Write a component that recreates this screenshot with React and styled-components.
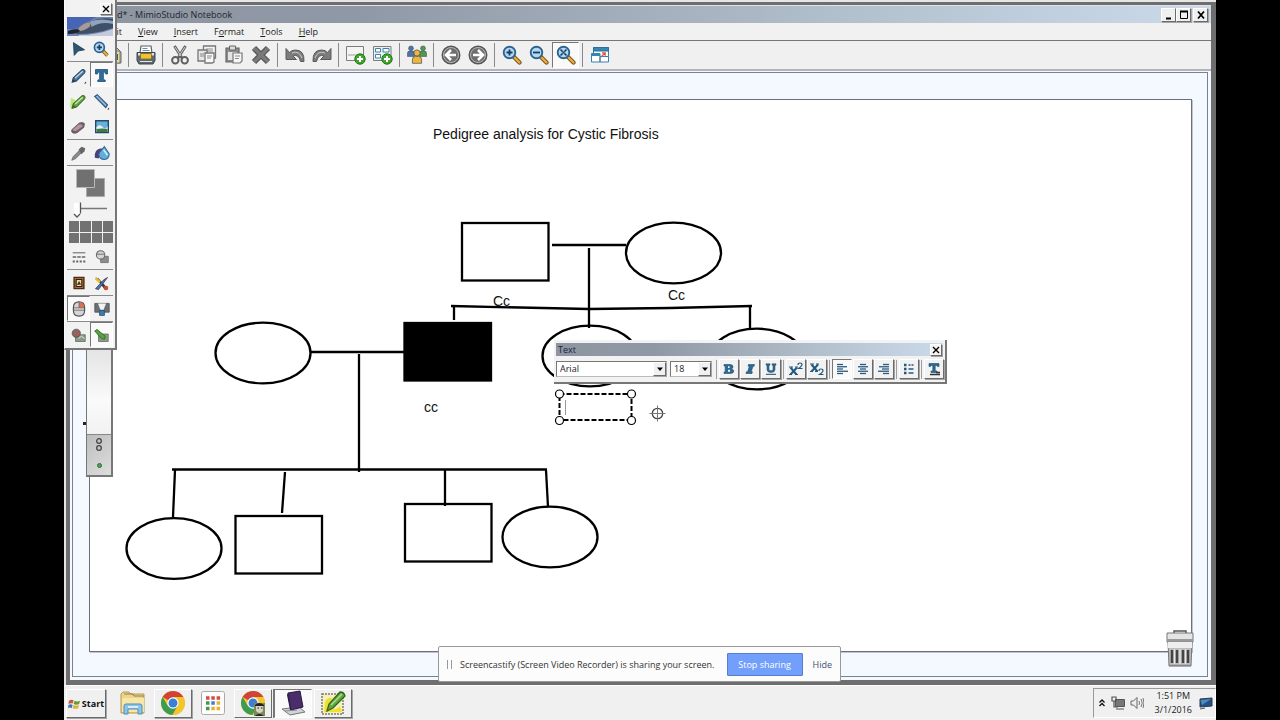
import React from 'react';
import styled, { createGlobalStyle, css } from 'styled-components';

// -----------------------------------------------------------------------------------------
// ---------------------------------------- Icons ------------------------------------------
// -----------------------------------------------------------------------------------------

const Icon = ({ size = 20, box = 20, children }) => (
  <svg width={size} height={size} viewBox={`0 0 ${box} ${box}`} fill="none" aria-hidden="true">
    {children}
  </svg>
);

const Lens = ({ children }) => (
  <Icon>
    <path d="M11.500 11.500l6 6" stroke="#6b5320" strokeWidth="4.200" strokeLinecap="round" />
    <path d="M12.500 12.500l5 5" stroke="#f0ae35" strokeWidth="2.400" strokeLinecap="round" />
    <circle cx="7.500" cy="7.500" r="5.800" fill="#b5d8f2" stroke="#2c6391" strokeWidth="1.900" />
    {children}
  </Icon>
);

const Plus = ({ x, y }) => (
  <g>
    <circle cx={x} cy={y} r="5.200" fill="#3fa52c" stroke="#257519" />
    <path d={`M${x - 3} ${y}h6M${x} ${y - 3}v6`} stroke="#fff" strokeWidth="2" />
  </g>
);

const Person = ({ x, y, color, scale = 1 }) => (
  <g transform={`translate(${x} ${y}) scale(${scale})`} fill={color} stroke="#3d4a55" strokeWidth="0.600">
    <circle cx="0" cy="-3.500" r="2.700" />
    <path d="M-4 5.500v-3q0-3 2.500-3h3q2.500 0 2.500 3v3z" />
  </g>
);

const Pen = ({ color, dark, glow, dot }) => (
  <Icon size={17}>
    {glow && <path d="M1 6l5 2 2 8-5 3-3-2z" fill={glow} />}
    <path d="M2.500 18l1.200-5L14 3.500q1.500-1 3 .3t.3 3L7.500 16.500z" fill={color} stroke={dark} strokeWidth="1.200" />
    <path d="M3 17.500l1-3.500 3 2.500z" fill={dark} />
    <path d="M6 13L15 5" stroke="#fff" strokeOpacity="0.700" strokeWidth="1.400" />
    {dot && <path d="M19 17v2.500h-2.500z" fill="#333" />}
  </Icon>
);

const Chrome = ({ children }) => (
  <Icon size={26} box={26}>
    <circle cx="13" cy="13" r="12" fill="#f3c52d" />
    <path d="M13 13L2.600 7A12 12 0 0 1 23.400 7H13z" fill="#cf4436" />
    <path d="M2.600 7A12 12 0 0 0 12.500 25l5.200-9.300L13 13 7.700 15.800z" fill="#3f9b4f" />
    <path d="M23.400 7A12 12 0 0 1 12.500 25l5.500-9.500L16 7z" fill="#f3c52d" />
    <circle cx="13" cy="13" r="5.700" fill="#fff" />
    <circle cx="13" cy="13" r="4.500" fill="#3b7ed6" />
    {children}
  </Icon>
);

const Bars = ({ rows }) => (
  <Icon size={14} box={14}>
    {rows.map(([x, w], i) => (
      <path key={i} d={`M${x} ${2.5 + i * 2.25}h${w}`} stroke="#2b5a80" strokeWidth="1.300" />
    ))}
  </Icon>
);

const icons = {
  open: (
    <Icon>
      <path d="M2 5h6l2 2h8v10H2z" fill="#e8c25a" stroke="#77613a" />
    </Icon>
  ),
  save: (
    <Icon>
      <path d="M1 2h13l5 5v11H1z" fill="#c9c9c9" stroke="#666" />
      <path d="M11 6h7v12h-7z" fill="#e9dd9a" stroke="#777" />
      <path d="M15 9v6" stroke="#555" strokeWidth="2" />
    </Icon>
  ),
  print: (
    <Icon>
      <path d="M4 8l1-7h10l1 7" fill="#fff" stroke="#56646e" strokeWidth="1.200" />
      <path d="M6.500 3.500h5M6.500 5.500h7" stroke="#6c8ca3" />
      <path d="M1 7.500h18v8l-2 3.500H3l-2-3.500z" fill="#5e6971" stroke="#3d474d" />
      <path d="M2 8h3v2.500H2zM15 8h3v2.500h-3z" fill="#dde1e3" />
      <path d="M4.500 8.500h11v5.500h-11z" fill="#f2c12e" stroke="#7c6827" strokeWidth="0.800" />
      <path d="M4 16.500h12" stroke="#dfe4e7" />
    </Icon>
  ),
  cut: (
    <Icon>
      <path d="M4.500 1l7.500 12M15.500 1L8 13" stroke="#606060" strokeWidth="2.800" />
      <path d="M5 2l6 9M15 2L9 11" stroke="#d5d5d5" strokeWidth="1" />
      <circle cx="5.300" cy="15.300" r="3.200" stroke="#606060" strokeWidth="2" />
      <circle cx="14.700" cy="15.300" r="3.200" stroke="#606060" strokeWidth="2" />
    </Icon>
  ),
  copy: (
    <Icon>
      <path d="M6.500 1h12v12h-12z" fill="#f4f4f4" stroke="#777" strokeWidth="1.300" />
      <path d="M9 4h7M9 6h7" stroke="#888" />
      <path d="M1 5h9v11H1z" fill="#e6e6e6" stroke="#777" strokeWidth="1.300" />
      <path d="M8 8h9v9l-2 1H8z" fill="#f8f8f8" stroke="#777" strokeWidth="1.300" />
      <path d="M10 11h5M10 13h4M3 9h4M3 11h4" stroke="#888" />
    </Icon>
  ),
  paste: (
    <Icon>
      <path d="M2 3h13v14H2z" fill="#8c8c8c" stroke="#666" strokeWidth="1.200" />
      <path d="M5.500 1h6v4h-6z" fill="#ddd" stroke="#666" />
      <path d="M4 7h9v8H4z" fill="#e3e3e3" />
      <path d="M9 8h9v8l-2 2H9z" fill="#f7f7f7" stroke="#777" strokeWidth="1.200" />
      <path d="M11 11h5M11 13.500h4" stroke="#888" />
    </Icon>
  ),
  remove: (
    <Icon>
      <path d="M3 3l14 14M17 3L3 17" stroke="#565656" strokeWidth="6" />
      <path d="M3 3l14 14M17 3L3 17" stroke="#7a7a7a" strokeWidth="3.600" />
    </Icon>
  ),
  undo: (
    <Icon>
      <path d="M1 3.500v11h10.500L8 11q5.500-2.500 7.500 5.500H19Q19.500 5 10.500 5 6.500 5 4.500 7.500z" fill="#7c7c7c" stroke="#5b5b5b" />
      <path d="M7 8q7-3 10 5" stroke="#c8c8c8" />
    </Icon>
  ),
  redo: (
    <Icon>
      <path d="M19 3.500v11H8.500L12 11q-5.500-2.500-7.500 5.500H1Q.5 5 9.500 5q4 0 6 2.500z" fill="#7c7c7c" stroke="#5b5b5b" />
      <path d="M13 8q-7-3-10 5" stroke="#c8c8c8" />
    </Icon>
  ),
  addPage: (
    <Icon>
      <path d="M.5 1.500h17v14H.5z" fill="#f4f4f4" stroke="#7d7d7d" />
      <path d="M2 10h9" stroke="#c9c9c9" strokeWidth="2" />
      <Plus x={14} y={14} />
    </Icon>
  ),
  importPage: (
    <Icon>
      <path d="M.5 1.500h17.500v14H.5z" fill="#e9eff3" stroke="#7d7d7d" />
      <path d="M2.500 3.500h5v3.500h-5zM2.500 9.500h5v3.500h-5zM10 3.500h6v3.500h-6z" fill="#fff" stroke="#3f82a5" />
      <Plus x={14} y={14} />
    </Icon>
  ),
  people: (
    <Icon>
      <Person x={4} y={6.500} color="#4d74ad" scale={0.900} />
      <Person x={16} y={6.500} color="#4f9a4c" scale={0.900} />
      <Person x={10} y={12} color="#f0b63a" scale={1.150} />
    </Icon>
  ),
  back: (
    <Icon>
      <circle cx="10" cy="10" r="8.800" fill="#6f6f6f" stroke="#555" strokeWidth="1.400" />
      <circle cx="10" cy="10" r="7.500" stroke="#b5b5b5" />
      <path d="M10 5l-5 5 5 5M5.500 10H15" stroke="#fff" strokeWidth="2.600" />
    </Icon>
  ),
  forward: (
    <Icon>
      <circle cx="10" cy="10" r="8.800" fill="#6f6f6f" stroke="#555" strokeWidth="1.400" />
      <circle cx="10" cy="10" r="7.500" stroke="#b5b5b5" />
      <path d="M10 5l5 5-5 5M14.500 10H5" stroke="#fff" strokeWidth="2.600" />
    </Icon>
  ),
  zoomIn: (
    <Lens>
      <path d="M4.500 7.500h6M7.500 4.500v6" stroke="#163f63" strokeWidth="1.800" />
    </Lens>
  ),
  zoomOut: (
    <Lens>
      <path d="M4 7.500h7" stroke="#163f63" strokeWidth="1.800" />
    </Lens>
  ),
  zoomFit: (
    <Lens>
      <path d="M4.500 4.500l6 6M10.500 4.500l-6 6" stroke="#163f63" strokeWidth="1.500" strokeDasharray="3 2.500" />
      <path d="M7.500 6.500v2" stroke="#163f63" strokeWidth="2" />
    </Lens>
  ),
  windows: (
    <Icon>
      <path d="M3.500 2.500h15v14h-15z" fill="#fff" stroke="#3a81aa" />
      <path d="M3.500 2.500h15V6h-15z" fill="#3787b5" stroke="#2d6f96" />
      <path d="M1.500 8.500h8.500v8.500H1.500zM10 11.500h8.500v5.500H10z" fill="#fff" stroke="#3a81aa" />
      <path d="M1.500 8.500h8.500v2.500H1.500z" fill="#3787b5" />
      <path d="M11 12l4-4M12 7.800h3.200v3" stroke="#d05c36" strokeWidth="1.200" />
    </Icon>
  ),
};

const tools = {
  select: (
    <Icon size={16}>
      <path d="M3 2l14 9-8 1.500L4 18z" fill="#2d5674" stroke="#203f56" />
    </Icon>
  ),
  zoom: (
    <Icon size={17}>
      <path d="M11 11l6 6" stroke="#6b5320" strokeWidth="4.200" />
      <path d="M12 12l5 5" stroke="#f0ae35" strokeWidth="2.400" />
      <circle cx="7.500" cy="7.500" r="5.800" fill="#b5d8f2" stroke="#2c6391" strokeWidth="2" />
      <path d="M4.500 7.500h6M7.500 4.500v6" stroke="#163f63" strokeWidth="2" />
    </Icon>
  ),
  pen: <Pen color="#4a7ba5" dark="#27435c" dot />,
  text: (
    <Icon size={15}>
      <path d="M2 2h16v6h-2.500q-.5-3-3-3v10.500l2.500.5v2H5v-2l2.500-.5V5q-2.500 0-3 3H2z" fill="#2e6f9f" stroke="#1c4869" />
    </Icon>
  ),
  highlighter: <Pen color="#63a838" dark="#3e6a26" glow="#bbe77e" />,
  line: (
    <Icon size={17}>
      <path d="M2 4l3-2 12 12-2 3z" fill="#8db4da" stroke="#33557a" strokeWidth="1.400" />
      <path d="M19 17v2.500h-2.500z" fill="#333" />
    </Icon>
  ),
  eraser: (
    <Icon size={15}>
      <path d="M1 13L11 4q5-2 7 1l-1 5-9 7q-5 2-7-1z" fill="#6f6267" stroke="#5d5156" />
      <path d="M2 13l8-7q4-1 6 2l-8 6q-4 2-6-1z" fill="#b5949d" />
    </Icon>
  ),
  picture: (
    <Icon size={14}>
      <path d="M1 1h18v17H1z" fill="#69b1dd" stroke="#234a69" strokeWidth="2" />
      <path d="M2 10q5-5 9 0t7-1v8H2z" fill="#e7eef0" />
      <path d="M2 13l8-1 8 1v4H2z" fill="#3f7a45" />
    </Icon>
  ),
  dropper: (
    <Icon size={15}>
      <path d="M1 19l2-5 8-8 3 3-8 8z" fill="#8a8a8a" stroke="#666" />
      <path d="M10 5l4-4 5 2-1 4-4 4z" fill="#666" />
    </Icon>
  ),
  fill: (
    <Icon size={16}>
      <path d="M1 16Q0 5 9 4l4 4q-7 2-7 9z" fill="#4c3f7c" />
      <path d="M7 9l6-7 6 9q0 7-6 7t-7-6z" fill="#67add9" stroke="#2c6896" strokeWidth="1.300" />
      <path d="M12 6l5 7" stroke="#d4eefb" strokeWidth="2" />
    </Icon>
  ),
  dash: (
    <Icon size={14}>
      <path d="M1 4h18" stroke="#666" strokeWidth="1.500" />
      <path d="M1 10h18" stroke="#666" strokeWidth="2" strokeDasharray="5 1.500" />
      <path d="M1 16.500h18" stroke="#666" strokeWidth="3" strokeDasharray="3 2" />
    </Icon>
  ),
  shapes: (
    <Icon size={14}>
      <path d="M8 9h11v9H8z" fill="#8c8c8c" stroke="#666" />
      <circle cx="8" cy="7" r="6" fill="#d5d5d5" stroke="#666" strokeWidth="1.500" />
      <path d="M2 6h12" stroke="#777" strokeWidth="1.500" />
    </Icon>
  ),
  gallery: (
    <Icon size={14}>
      <path d="M3 2h14v16H3z" fill="#b36a28" stroke="#4c2c13" strokeWidth="2" />
      <path d="M6 5h8v10H6z" fill="#f3d8a2" stroke="#222" strokeWidth="1.500" />
      <path d="M7 13l3-6 3 5z" fill="#333" />
    </Icon>
  ),
  brushes: (
    <Icon size={15}>
      <path d="M2 2l4 1 12 13-3 3z" fill="#3a3a52" />
      <path d="M18 2l-5 3L2 17l4 1z" fill="#4a76bc" stroke="#333" />
      <path d="M2 3l6 5" stroke="#e4bd36" strokeWidth="3.500" />
      <circle cx="16" cy="16" r="3" fill="#c84d2c" />
    </Icon>
  ),
  mouse: (
    <Icon size={16}>
      <path d="M3 8q0-7 7-7t7 7v4q0 7-7 7t-7-7z" fill="#d6d6d6" stroke="#555" strokeWidth="1.500" />
      <path d="M10 1.500q6.500 0 6.500 7H10z" fill="#e0714d" />
      <path d="M3 8.500h14M10 1v7.500M3.500 11.500h13" stroke="#666" />
    </Icon>
  ),
  screen: (
    <Icon size={16}>
      <path d="M1 3h18v11H1z" fill="#6a6f73" stroke="#4e5255" />
      <path d="M5 3h10l-3 8H8z" fill="#f3f3f3" />
      <path d="M7 12h6v6H7z" fill="#3a7fb3" stroke="#234e72" />
    </Icon>
  ),
  record: (
    <Icon size={15}>
      <path d="M6 9h13v9H6z" fill="#8a9b86" stroke="#626a60" />
      <circle cx="7" cy="7" r="5.500" fill="#7d6a6a" stroke="#5c5050" />
      <circle cx="8" cy="7" r="2.500" fill="#cb4d52" />
      <path d="M10 14l4-3 4 3" stroke="#fff" />
    </Icon>
  ),
  write: (
    <Icon size={15}>
      <path d="M6 8h13v10H6z" fill="#8a9b86" stroke="#626a60" />
      <path d="M1 4l3-2 11 9-1 4-4-1z" fill="#52a83f" stroke="#316d27" strokeWidth="1.300" />
    </Icon>
  ),
};

const Glyph = {
  bold: (
    <Icon size={12} box={12}>
      <path d="M1 1.500h6q3.200.2 3 2.500-.2 1.500-1.800 1.900Q10.800 6.500 10.800 8q0 2.500-3.800 2.500H1V9h1.200V3H1z" fill="#2e6a96" stroke="#1d4a6b" strokeWidth="0.600" />
      <path d="M5 3.200h1.500v1.800H5zM5 6.800h2v2H5z" fill="#fff" />
    </Icon>
  ),
  italic: (
    <Icon size={12} box={12}>
      <path d="M4.500 1.500h6l-.4 1.700H9L7.200 8.800h1.200L8 10.500H2l.4-1.700h1.200l1.800-5.600H4.100z" fill="#2e6a96" stroke="#1d4a6b" strokeWidth="0.600" />
    </Icon>
  ),
  underline: (
    <Icon size={12} box={12}>
      <path d="M1 .8h4v1.400H4v4q0 1.500 2 1.500t2-1.500v-4H7V.8h4v1.400h-1v4.300Q10 9.500 6 9.500T2 6.500V2.200H1z" fill="#2e6a96" stroke="#1d4a6b" strokeWidth="0.500" />
      <path d="M1 11.300h10" stroke="#1d4a6b" />
    </Icon>
  ),
  superscript: (
    <Icon size={14} box={14}>
      <path d="M1.500 5.500l6 7M8 5.500l-6.500 7" stroke="#24597f" strokeWidth="2" />
      <path d="M0 5h4M6 5h3M0 12.500h3M6 12.500h3" stroke="#24597f" />
      <path d="M9 3q0-2 2-2t2 1.800Q13 4 9.500 6.500H13.500" stroke="#24597f" strokeWidth="1.200" />
    </Icon>
  ),
  subscript: (
    <Icon size={14} box={14}>
      <path d="M1.500 2.500l6 7M8 2.500l-6.500 7" stroke="#24597f" strokeWidth="2" />
      <path d="M0 2h4M6 2h3M0 9.500h3M5 9.500h3" stroke="#24597f" />
      <path d="M9 9q0-2 2-2t2 1.800Q13 10 9.500 12.500H13.500" stroke="#24597f" strokeWidth="1.200" />
    </Icon>
  ),
  left: <Bars rows={[[2, 6], [2, 10], [2, 6], [2, 11], [2, 6]]} />,
  center: <Bars rows={[[4, 6], [2, 10], [4, 6], [2, 10], [4, 6]]} />,
  right: <Bars rows={[[6, 6], [2, 10], [5, 7], [1, 11], [6, 6]]} />,
  list: (
    <Icon size={14} box={14}>
      <path d="M2 3h2.500M2 7h2.500M2 11h2.500" stroke="#24597f" strokeWidth="2.400" />
      <path d="M6.500 3h2M9.500 3h2M6.500 7h5M6.500 11h5" stroke="#24597f" strokeWidth="1.300" />
    </Icon>
  ),
  format: (
    <Icon size={14} box={14}>
      <path d="M2 1.500h10v3h-1.500l-.5-1H8.200V9H10v1.500H4V9h1.800V3.500H4l-.5 1H2z" fill="#2e6a96" stroke="#1d4a6b" strokeWidth="0.600" />
      <path d="M3 12.500h10M9 10.500h4" stroke="#333" strokeWidth="1.500" />
    </Icon>
  ),
  close: (
    <Icon size={8} box={8}>
      <path d="M1 1l6 6M7 1L1 7" stroke="#000" strokeWidth="1.400" />
    </Icon>
  ),
  minimize: (
    <Icon size={10} box={10}>
      <path d="M2 8.500h5" stroke="#000" strokeWidth="2" />
    </Icon>
  ),
  maximize: (
    <Icon size={10} box={10}>
      <path d="M1.500 1.500h7v7h-7z" stroke="#000" />
      <path d="M1 1.500h8" stroke="#000" strokeWidth="2" />
    </Icon>
  ),
  exit: (
    <Icon size={10} box={10}>
      <path d="M2 1.500l6 7M8 1.500l-6 7" stroke="#000" strokeWidth="1.800" />
    </Icon>
  ),
  arrow: (
    <Icon size={8} box={8}>
      <path d="M1 2.500h6L4 6z" fill="#000" />
    </Icon>
  ),
};

// -----------------------------------------------------------------------------------------
// ---------------------------------------- Data -------------------------------------------
// -----------------------------------------------------------------------------------------

const menus = ['Edit', 'View', 'Insert', 'Format', 'Tools', 'Help'];
const menuKey = { Format: 1 };

const toolbarGroups = [
  ['open', 'save'],
  ['print'],
  ['cut', 'copy', 'paste', 'remove'],
  ['undo', 'redo'],
  ['addPage', 'importPage'],
  ['people'],
  ['back', 'forward'],
  ['zoomIn', 'zoomOut', 'zoomFit'],
  ['windows'],
];

const paletteTop = [
  { items: ['select', 'zoom'], line: true },
  { items: ['pen', 'text'] },
  { items: ['highlighter', 'line'] },
  { items: ['eraser', 'picture'], line: true },
  { items: ['dropper', 'fill'], line: true },
];

const paletteBottom = [
  { items: ['dash', 'shapes'], line: true },
  { items: ['gallery', 'brushes'], line: true },
  { items: ['mouse', 'screen'], line: true },
  { items: ['record', 'write'] },
];

const pressedTools = ['text', 'mouse', 'write'];

const textGroups = [
  ['bold', 'italic', 'underline'],
  ['superscript', 'subscript'],
  ['left', 'center', 'right'],
  ['list'],
  ['format'],
];

const females = [
  [583.5, 153],
  [173, 253],
  [500, 256],
  [667, 259],
  [84, 448.5],
  [460, 437],
];

const males = [
  [372, 123],
  [314.5, 223, true],
  [145.5, 416],
  [315, 404],
];

const lines = [
  'M462 145H536',
  'M499 148V228',
  'M361 206L430 207.500 499 209 580 208 662 206',
  'M364 206V220',
  'M660 206V229',
  'M221 252H315',
  'M269 254V372',
  'M82 369.500H457',
  'M85 370L83 417',
  'M195 372L192 413',
  'M355 370V406',
  'M456 370L458 407',
];

// -----------------------------------------------------------------------------------------
// -------------------------------------- Components ---------------------------------------
// -----------------------------------------------------------------------------------------

const Pedigree = () => (
  <Drawing role="img" aria-label="Pedigree chart">
    <g fill="none" stroke="#000" strokeWidth="2.300">
      {females.map(([x, y]) => (
        <ellipse key={`${x}-${y}`} cx={x} cy={y} rx="47.500" ry="30.300" />
      ))}
      {males.map(([x, y, filled]) => (
        <rect key={`${x}-${y}`} x={x} y={y} width="86.500" height="57.500" fill={filled ? '#000' : 'none'} />
      ))}
      {lines.map((d) => (
        <path key={d} d={d} />
      ))}
    </g>
    <g stroke="#000" fill="#fff">
      <rect x="469.500" y="294" width="72" height="26" fill="none" strokeWidth="2" strokeDasharray="5 2" />
      <path d="M475.500 300v15" stroke="#999" />
      {[[469.5, 294], [541.5, 294], [469.5, 320.5], [541.5, 320.5]].map(([x, y]) => (
        <circle key={`${x}-${y}`} cx={x} cy={y} r="4" strokeWidth="1.200" />
      ))}
    </g>
    <g stroke="#444" fill="none">
      <circle cx="567.500" cy="313.500" r="5.200" strokeWidth="1.300" />
      <path d="M559.500 313.500h16M567.500 305.500v16" stroke="#777" />
    </g>
  </Drawing>
);

const Palette = () => {
  const renderRow = ({ items, line }) => (
    <ToolRow key={items[0]} $line={line}>
      {items.map((name) => (
        <ToolButton key={name} type="button" aria-label={name} $pressed={pressedTools.includes(name)}>
          {tools[name]}
        </ToolButton>
      ))}
    </ToolRow>
  );

  return (
    <PaletteWindow>
      <PaletteHeader>
        <CloseButton type="button" aria-label="Close tools">
          {Glyph.close}
        </CloseButton>
      </PaletteHeader>
      <Banner viewBox="0 0 47 19" preserveAspectRatio="none" aria-hidden="true">
        <path d="M0 0h47v19H0z" fill="#6f83b5" />
        <path d="M0 0h30L8 12H0z" fill="#4865b5" />
        <path d="M8 13Q28-2 47 2v9Q30 17 10 17z" fill="#3e4f66" />
        <path d="M24 4q12-3 23 0v3q-12-3-22 3z" fill="#8fa3bd" />
        <path d="M11 12q6-7 14-7l-2 5q-6 4-10 4z" fill="#a99a98" />
        <path d="M1 14q6-3 12-1 0 4-12 4z" fill="#1f2430" />
        <path d="M12 18q18 0 35-6v7H12z" fill="#c4c9dd" />
      </Banner>
      {paletteTop.map(renderRow)}
      <ColorArea viewBox="0 0 46 34" role="img" aria-label="Fill and line colour">
        <path d="M19.500 12.500h18v18h-18z" fill="#767676" stroke="#a9a9a9" />
        <path d="M9.500 3.500h18v18h-18z" fill="#707070" stroke="#b9b9b9" />
      </ColorArea>
      <Thickness viewBox="0 0 46 20" role="img" aria-label="Line thickness">
        <path d="M14 8.500h26" stroke="#777" strokeWidth="1.500" />
        <path d="M7 3h6v11l-3 3-3-3z" fill="#fff" />
        <path d="M13.500 2.500v11M7 14l3 3 3-3" stroke="#555" fill="none" strokeWidth="1.300" />
      </Thickness>
      <Swatches>
        {Array.from({ length: 8 }, (_, i) => (
          <Swatch key={i} type="button" aria-label={`Colour ${i + 1}`} />
        ))}
      </Swatches>
      {paletteBottom.map(renderRow)}
    </PaletteWindow>
  );
};

const TextToolbar = () => (
  <TextWindow>
    <TextTitle>
      <span>Text</span>
      <CloseButton type="button" aria-label="Close text tools">
        {Glyph.close}
      </CloseButton>
    </TextTitle>
    <TextControls>
      <Combo $width="111px">
        <select aria-label="Font" defaultValue="Arial">
          <option>Arial</option>
        </select>
        <ComboArrow>{Glyph.arrow}</ComboArrow>
      </Combo>
      <Combo $width="42px">
        <select aria-label="Font size" defaultValue="18">
          <option>18</option>
        </select>
        <ComboArrow>{Glyph.arrow}</ComboArrow>
      </Combo>
      {textGroups.map((group) => (
        <React.Fragment key={group[0]}>
          <TextSeparator />
          {group.map((name) => (
            <TextButton key={name} type="button" aria-label={name} $pressed={name === 'left'}>
              {Glyph[name]}
            </TextButton>
          ))}
        </React.Fragment>
      ))}
    </TextControls>
  </TextWindow>
);

const Taskbar = () => (
  <TaskbarWrapper>
    <StartButton type="button">
      <Icon size={13} box={14}>
        <path d="M1 4q3-2 5-.5L5 7Q3 6 .5 7.500z" fill="#c9573a" />
        <path d="M7 4q3 1.500 6 0l-1 3.500q-3 1.500-6 0z" fill="#6b9a3c" />
        <path d="M.5 8.500Q3 7 5 8.500L4 12q-2-1.500-4 0z" fill="#3f77b5" />
        <path d="M6 8.500q3 1.500 6 0L11 12q-3 1.500-6 0z" fill="#e0b13b" />
      </Icon>
      Start
    </StartButton>
    <TaskList>
      <TaskButton type="button" aria-label="File Explorer">
        <Icon size={26} box={26}>
          <path d="M1 4l2-2h6l2 2h13v19H1z" fill="#ecd489" stroke="#b99a4a" />
          <path d="M4 4h9l1 2h10" stroke="#8c8250" />
          <path d="M2 8h22v14H2z" fill="#f6e7a8" />
          <path d="M4 24v-8q0-2 2-2h14q2 0 2 2v8h-4v-5H8v5z" fill="#8cc4e8" stroke="#4f8db9" />
          <path d="M8 17h10" stroke="#d9effb" strokeWidth="2" />
        </Icon>
      </TaskButton>
      <TaskButton type="button" aria-label="Chrome" $raised>
        <Chrome />
      </TaskButton>
      <TaskButton type="button" aria-label="Apps">
        <Icon size={26} box={26}>
          <rect x="1.500" y="1.500" width="23" height="23" rx="2" fill="#fff" stroke="#aaa" />
          <path d="M6 8h3.500M11.300 8h3.500M16.600 8h3.500" stroke="#d84b3e" strokeWidth="3.500" />
          <path d="M6 13h3.500M6 18.500h3.500" stroke="#3f9b4f" strokeWidth="3.500" />
          <path d="M11.300 13h3.500" stroke="#3b7ed6" strokeWidth="3.500" />
          <path d="M16.600 13h3.500M11.300 18.500h3.500M16.600 18.500h3.500" stroke="#ecb22e" strokeWidth="3.500" />
        </Icon>
      </TaskButton>
      <TaskButton type="button" aria-label="Chrome profile" $raised $stacked>
        <Chrome>
          <path d="M14 13h11v13H14z" fill="#7b8a55" />
          <path d="M16 15q3.500-3 7 0v6q-3.500 4-7 0z" fill="#d8d2c4" />
          <path d="M15 15q4-4 9 0v1h-9zM15 26q4-4 9 0z" fill="#222" />
          <path d="M17.500 18h1.500M21 18h1.500" stroke="#222" />
        </Chrome>
      </TaskButton>
      <TaskButton type="button" aria-label="MimioStudio" $pressed>
        <Icon size={26} box={26}>
          <path d="M2 19l17-2 6 5-15 3z" fill="#d0d3d8" stroke="#777" />
          <path d="M8 3l12-2 3 16-12 3z" fill="#4a2d6b" stroke="#2b1a40" />
          <path d="M8 3l-1 2 3 15 1 0z" fill="#2b1a40" />
          <path d="M5 21l12-1" stroke="#888" />
        </Icon>
      </TaskButton>
      <TaskButton type="button" aria-label="MimioStudio Notebook" $raised>
        <Icon size={26} box={26}>
          <path d="M2 4h21v20H2z" fill="#f5f0c0" stroke="#7c7c66" strokeWidth="1.500" strokeDasharray="2 1" />
          <path d="M5 12q2-5 7-4L9 19q6 2 11-3l2 6H4z" fill="#f0df2f" />
          <path d="M7 21l2-7L20 2q4 0 5 4L13 18z" fill="#62a83e" stroke="#33651f" strokeWidth="1.300" />
          <path d="M11 15L22 4" stroke="#b0dc90" strokeWidth="1.500" />
        </Icon>
      </TaskButton>
    </TaskList>
    <Tray>
      <Icon size={8} box={8}>
        <path d="M1.500 3.500L4 1l2.500 2.500M1.500 7L4 4.500 6.500 7" stroke="#111" strokeWidth="1.300" />
      </Icon>
      <Icon size={14} box={14}>
        <path d="M4.500 3.500h9v7h-9z" fill="#777" stroke="#555" />
        <path d="M1 1h4v4H1zM3 5v6h4M5 13h8" stroke="#555" strokeWidth="1.200" />
      </Icon>
      <Icon size={14} box={14}>
        <path d="M1 5h2.500L7 1.500v11L3.500 9H1z" fill="#eee" stroke="#666" />
        <path d="M9 5q1 2 0 4M11 3q2.500 4 0 8M13 2q2 5 0 10" stroke="#777" />
      </Icon>
      <Clock>
        <time>1:51 PM</time>
        <time>3/1/2016</time>
      </Clock>
      <Icon size={14} box={14}>
        <path d="M1 3l12-1v8L1 11z" fill="#1e5386" stroke="#2b3b4a" />
        <path d="M1.500 4L12 3 3 9z" fill="#4e8cc0" />
        <path d="M1 13l5-1" stroke="#555" />
      </Icon>
    </Tray>
  </TaskbarWrapper>
);

const App = () => (
  <>
    <GlobalStyle />
    <Screen>
      <Desktop>
        <AppWindow>
          <TitleBar>
            <Title>d* - MimioStudio Notebook</Title>
            <WindowButtons>
              <WindowButton type="button" aria-label="Minimize">{Glyph.minimize}</WindowButton>
              <WindowButton type="button" aria-label="Maximize">{Glyph.maximize}</WindowButton>
              <WindowButton type="button" aria-label="Close" $apart>{Glyph.exit}</WindowButton>
            </WindowButtons>
          </TitleBar>
          <MenuBar>
            {menus.map((name) => {
              const at = menuKey[name] || 0;
              return (
                <MenuItem key={name} type="button">
                  {name.slice(0, at)}
                  <u>{name[at]}</u>
                  {name.slice(at + 1)}
                </MenuItem>
              );
            })}
          </MenuBar>
          <Toolbar>
            {toolbarGroups.map((group, index) => (
              <React.Fragment key={group[0]}>
                {index > 0 && <Separator />}
                {group.map((name) => (
                  <ToolbarButton key={name} type="button" aria-label={name} $pressed={name === 'zoomFit'}>
                    {icons[name]}
                  </ToolbarButton>
                ))}
              </React.Fragment>
            ))}
          </Toolbar>
          <Workspace>
            <Page>
              <Pedigree />
              <Label $x="343px" $y="26px">Pedigree analysis for Cystic Fibrosis</Label>
              <Label $x="403px" $y="193px">Cc</Label>
              <Label $x="578px" $y="187px">Cc</Label>
              <Label $x="334px" $y="299px">cc</Label>
            </Page>
            <Trash viewBox="0 0 28 37" aria-hidden="true">
              <path d="M8 3V1h12v2" stroke="#555" strokeWidth="1.500" fill="none" />
              <path d="M1 3h26v9H1z" fill="#e4e4e4" stroke="#777" />
              <path d="M1 9h26v2H1z" fill="#999" />
              <path d="M2 12h24l-1 24H3z" fill="#bdbdbd" stroke="#777" />
              <path d="M2 12h24v6H2z" fill="#eee" />
              <path d="M6 20v13M11 20v13M17 20v13M22 20v13" stroke="#444" strokeWidth="2.500" />
              <path d="M8.500 19v15M14 19v15M19.500 19v15" stroke="#e9e9e9" strokeWidth="1.200" />
              <path d="M3 35.500h22" stroke="#888" strokeWidth="1.500" />
            </Trash>
          </Workspace>
        </AppWindow>
        <Taskbar />
        <Dock>
          <DockHandle />
          <DockFoot>
            <Icon size={20} box={20}>
              <circle cx="10" cy="6" r="2.300" stroke="#444" strokeWidth="1.300" />
              <circle cx="10" cy="13" r="2.300" stroke="#444" strokeWidth="1.300" />
            </Icon>
            <DockLight />
          </DockFoot>
        </Dock>
        <Palette />
        <TextToolbar />
        <ShareBar>
          <Grip />
          <ShareText>Screencastify (Screen Video Recorder) is sharing your screen.</ShareText>
          <StopButton type="button">Stop sharing</StopButton>
          <HideLink href="#hide">Hide</HideLink>
        </ShareBar>
      </Desktop>
    </Screen>
  </>
);

// -----------------------------------------------------------------------------------------
// ---------------------------------- Styled Components ------------------------------------
// -----------------------------------------------------------------------------------------

const uiFont = "'Open Sans', 'Noto Sans', sans-serif";
const canvasFont = "'Liberation Sans', Arial, sans-serif";

const titleGradient = css`
  background: linear-gradient(90deg, #8d95a0 0%, #8f99a5 25%, #a3afba 50%, #b8c6d4 75%, #cbdaea 100%);
`;

const raised = css`
  border: 1px solid;
  border-color: #fff #6b6b6b #6b6b6b #fff;
  box-shadow: 1px 1px 0 #a5a5a5;
`;

const pressed = css`
  border: 1px solid;
  border-color: #777 #fff #fff #777;
  background: #fafafa;
`;

const GlobalStyle = createGlobalStyle`
  * {
    box-sizing: border-box;
  }
  body {
    margin: 0;
    background: #000;
    font: 9px ${uiFont};
    color: #1a1a1a;
  }
  button {
    display: flex;
    align-items: center;
    justify-content: center;
    flex: none;
    margin: 0;
    padding: 0;
    border: 0;
    background: none;
    font: inherit;
    color: inherit;
  }
  svg {
    flex: none;
  }
`;

const Screen = styled.div`
  display: flex;
  justify-content: center;
  height: 100vh;
`;

const Desktop = styled.main`
  position: relative;
  display: flex;
  flex-direction: column;
  width: 90%;
  background: #e6e6e6;
  overflow: hidden;
`;

const AppWindow = styled.section`
  flex: 1;
  display: flex;
  flex-direction: column;
  min-height: 0;
  margin: 2px 0 0 2px;
  border: solid #6e6e6e;
  border-width: 3px 5px 5px 4px;
  background: #f4f8ff;
`;

const TitleBar = styled.header`
  display: flex;
  align-items: center;
  justify-content: space-between;
  height: 18px;
  padding: 0 3px 0 47px;
  border-top: 1px solid #dfe3e8;
  ${titleGradient}
`;

const Title = styled.span`
  line-height: 16px;
  color: #22242c;
`;

const WindowButtons = styled.div`
  display: flex;
`;

const WindowButton = styled.button`
  width: 15px;
  height: 14px;
  margin-left: ${({ $apart }) => ($apart ? '2px' : '0')};
  background: #f0f0f0;
  ${raised}
`;

const MenuBar = styled.nav`
  display: flex;
  gap: 16px;
  height: 18px;
  padding-left: 36px;
  border-bottom: 1px solid #777;
  background: #f1f1f1;
`;

const MenuItem = styled.button`
  display: block;
  line-height: 17px;
`;

const Toolbar = styled.div`
  display: flex;
  align-items: center;
  height: 30px;
  padding-left: 1px;
  border-bottom: 2px solid #b3b5bb;
  background: #f0f0f0;
`;

const ToolbarButton = styled.button`
  width: 27px;
  height: 26px;
  ${({ $pressed }) => $pressed && pressed}
`;

const Separator = styled.span`
  width: 1px;
  height: 24px;
  margin: 0 3px;
  background: #8a8a8a;
`;

const Workspace = styled.div`
  position: relative;
  flex: 1;
  display: flex;
  min-height: 0;
  margin: 1px 3px 3px 2px;
  padding: 26px 15px 24px 16px;
  border: 1px solid #7b808c;
`;

const Page = styled.div`
  position: relative;
  flex: 1;
  border: 1px solid #6c7078;
  background: #fff;
  box-shadow: 1px 1px 0 #c0c4cc;
`;

const Drawing = styled.svg`
  display: block;
  width: 100%;
  height: 100%;
`;

const Label = styled.span`
  position: absolute;
  left: ${({ $x }) => $x};
  top: ${({ $y }) => $y};
  font: 14px/16px ${canvasFont};
  color: #111;
  white-space: nowrap;
`;

const Trash = styled.svg`
  position: absolute;
  right: 13px;
  bottom: 9px;
  width: 28px;
  height: 37px;
`;

const PaletteWindow = styled.aside`
  position: absolute;
  top: 0;
  left: 0;
  width: 53px;
  padding: 0 2px;
  border: solid #777;
  border-width: 0 2px 2px 1px;
  border-left-color: #fafafa;
  background: #f2f2f2;
`;

const PaletteHeader = styled.div`
  display: flex;
  align-items: center;
  justify-content: flex-end;
  height: 17px;
  padding-right: 1px;
`;

const CloseButton = styled.button`
  width: 12px;
  height: 12px;
  background: #f4f4f4;
  ${raised}
`;

const Banner = styled.svg`
  display: block;
  width: 100%;
  height: 19px;
`;

const ToolRow = styled.div`
  display: grid;
  grid-template-columns: 1fr 1fr;
  height: 26px;
  border-bottom: 1px solid ${({ $line }) => ($line ? '#8a8a8a' : 'transparent')};
`;

const ToolButton = styled.button`
  padding-top: 1px;
  ${({ $pressed }) => $pressed && pressed}
`;

const ColorArea = styled.svg`
  display: block;
  width: 100%;
  height: 34px;
`;

const Thickness = styled.svg`
  display: block;
  width: 100%;
  height: 20px;
`;

const Swatches = styled.div`
  display: grid;
  grid-template-columns: repeat(4, 1fr);
  gap: 1px;
  height: 24px;
  padding: 1px 0 1px 2px;
`;

const Swatch = styled.button`
  background: #727272;
`;

const Dock = styled.div`
  position: absolute;
  top: 350px;
  left: 22px;
  display: flex;
  flex-direction: column;
  width: 27px;
  height: 127px;
  border: 1px solid #777;
  border-width: 0 2px 2px 1px;
  background: linear-gradient(#e4e4e4, #fafafa 40%, #e8e8e8);
`;

const DockHandle = styled.span`
  position: absolute;
  top: 72px;
  left: -4px;
  width: 3px;
  height: 3px;
  background: #222;
`;

const DockFoot = styled.div`
  display: flex;
  flex-direction: column;
  align-items: center;
  gap: 8px;
  height: 41px;
  margin-top: auto;
  border-top: 1px solid #888;
  background: linear-gradient(135deg, #bdbdbd, #dedede);
`;

const DockLight = styled.span`
  width: 5px;
  height: 5px;
  border: 1px solid #2c6b34;
  border-radius: 50%;
  background: #4fa35a;
`;

const TextWindow = styled.section`
  position: absolute;
  top: 340px;
  left: 490px;
  width: 393px;
  padding: 3px 2px;
  border: solid #777;
  border-width: 0 2px 2px 0;
  background: #f2f2f2;
`;

const TextTitle = styled.div`
  display: flex;
  align-items: center;
  justify-content: space-between;
  height: 13px;
  padding: 0 1px 0 2px;
  line-height: 13px;
  color: #1b2440;
  ${titleGradient}
`;

const TextControls = styled.div`
  display: flex;
  align-items: center;
  gap: 1px;
  height: 23px;
  padding-top: 3px;
`;

const Combo = styled.label`
  flex: none;
  display: flex;
  width: ${({ $width }) => $width};
  height: 16px;
  margin-right: 2px;
  border: 1px solid;
  border-color: #777 #bbb #bbb #777;
  background: #fff;

  select {
    flex: 1;
    min-width: 0;
    padding: 0 0 0 3px;
    border: 0;
    background: none;
    appearance: none;
    font: 9px/14px ${uiFont};
    color: #222;
  }
`;

const ComboArrow = styled.span`
  display: flex;
  align-items: center;
  justify-content: center;
  width: 13px;
  background: #f0f0f0;
  pointer-events: none;
  ${raised}
`;

const TextButton = styled.button`
  width: 20px;
  height: 20px;
  background: #f2f2f2;
  ${({ $pressed }) => ($pressed ? pressed : raised)}
`;

const TextSeparator = styled.span`
  flex: none;
  width: 1px;
  height: 19px;
  margin: 0 1px;
  background: #a0a0a0;
`;

const ShareBar = styled.div`
  position: absolute;
  bottom: 38px;
  left: 50%;
  display: flex;
  align-items: center;
  width: 403px;
  height: 36px;
  margin-left: -202px;
  padding: 0 8px;
  border: 1px solid #999;
  border-radius: 2px;
  background: #fcfcfc;
`;

const Grip = styled.span`
  flex: none;
  width: 5px;
  height: 9px;
  margin-right: 8px;
  border: solid #999;
  border-width: 0 1px;
`;

const ShareText = styled.span`
  flex: 1;
  white-space: nowrap;
  color: #333;
`;

const StopButton = styled.button`
  width: 76px;
  height: 23px;
  border: 1px solid #5580c8;
  border-radius: 1px;
  background: #729ffb;
  color: #fff;
`;

const HideLink = styled.a`
  margin-left: 10px;
  color: #3f4f75;
  text-decoration: none;
`;

const TaskbarWrapper = styled.footer`
  display: flex;
  align-items: center;
  height: 35px;
  padding-left: 2px;
  border-top: 1px solid #fff;
  background: #f0f0f0;
`;

const StartButton = styled.button`
  width: 40px;
  height: 29px;
  gap: 1px;
  font-weight: 700;
  color: #111;
  ${raised}
`;

const TaskList = styled.div`
  flex: 1;
  display: flex;
  gap: 2px;
  margin-left: 8px;
`;

const TaskButton = styled.button`
  width: 38px;
  height: 29px;
  ${({ $raised }) => $raised && raised}
  ${({ $stacked }) => $stacked && css`
    box-shadow: 1px 0 0 #f0f0f0, 2px 0 0 #777;
  `}
  ${({ $pressed }) => $pressed && pressed}
`;

const Tray = styled.div`
  display: flex;
  align-items: center;
  gap: 5px;
  height: 30px;
  padding: 0 2px 0 4px;
  border: 1px solid #aaa;
  border-color: #999 #fff #fff #999;
`;

const Clock = styled.div`
  display: flex;
  flex-direction: column;
  align-items: center;
  margin: 0 2px 0 6px;
  line-height: 14px;
`;

export default App;
